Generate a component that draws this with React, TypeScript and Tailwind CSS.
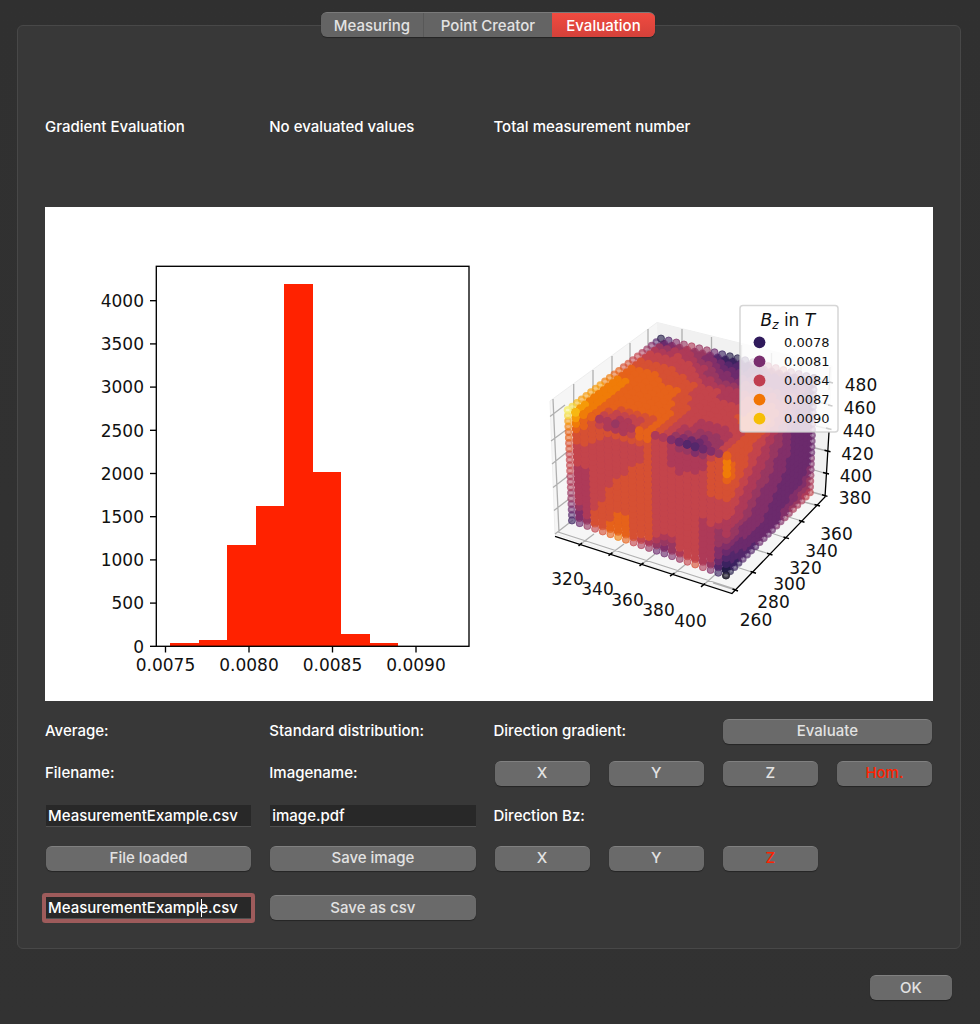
import React from "react";

type Point = [number, number];

const PALETTE = [
  "#17161c", "#241c48", "#3b2260", "#54276b", "#6b2a6c", "#822f69", "#983761", "#ae3a58",
  "#c4444b", "#d65033", "#e6621a", "#f07c08", "#f69a08", "#f7b812", "#f5d93a", "#f6f07c",
];
const N = 20;

const LEFT_FACE = [
  "fecbaa998888777665432",
  "dcba99888877777776554",
  "baa999888877777777766",
  "a99998888888888889998",
  "789988888888888999999",
  "779888888888999999aaa",
  "6798888888999999aaaab",
  "7798888889999999aaaaa",
  "789888899999999999998",
  "aa9888999999999999987",
  "aa9999999999999999976",
  "788888888888888888764",
  "788888888888888887654",
  "577778888888888887665",
  "467777888888888888876",
  "367778888888888888888",
  "357778888888888888889",
  "467788888888777777777",
  "589999998888877777765",
  "699999998888766655432",
  "abbba9998887776543210",
];

const RIGHT_FACE = [
  [9.5, 9, 9, 7, 5, 3],
  [10, 8.6, 7.3, 6, 4, 3],
  [8.5, 7.3, 6.3, 5.2, 4, 4],
  [7.2, 6.3, 5.2, 4.6, 4, 4],
  [4, 4.5, 4.6, 4, 4.2, 5],
  [0.5, 2.5, 3.5, 4.5, 6.5, 8.3],
];

const TOP_STOPS = [0, 0.1, 0.2, 0.4, 0.6, 0.8, 0.9, 1];
const TOP_FACE = [
  [15, 11, 7.5, 6.5, 7.5, 9.5, 7, 3.8, 3, 5, 10],
  [12.5, 10.5, 9, 7.5, 8, 9.5, 8, 6.2, 4.8, 6.2, 9],
  [12, 10.5, 10, 9.6, 10, 9.8, 8, 7, 7, 7.3, 9],
  [11.4, 10.8, 10, 10, 10, 8.8, 8, 8, 8, 9, 9],
  [9.4, 9.6, 9.6, 9.3, 9, 8, 7.6, 7, 7.5, 8, 7],
  [7, 8, 8, 7.5, 6.5, 5, 4, 5, 5, 5, 4],
  [5, 6, 7, 6, 4.5, 2.5, 3, 4, 5, 4, 3],
  [1, 4.5, 7, 5.5, 2, 0.5, 4, 7, 7.5, 4.5, 0.5],
];

const mix = (a: number, b: number, t: number) => a + (b - a) * t;

function along(row: number[], u: number) {
  const x = u * (row.length - 1);
  const i = Math.min(Math.floor(x), row.length - 2);
  return mix(row[i], row[i + 1], x - i);
}

function sample(grid: number[][], stops: number[], u: number, v: number) {
  let j = 0;
  while (j < stops.length - 2 && v > stops[j + 1]) j += 1;
  const t = (v - stops[j]) / (stops[j + 1] - stops[j]);
  return mix(along(grid[j], u), along(grid[j + 1], u), t);
}

function place(a: Point, b: Point, c: Point, d: Point, u: number, v: number): Point {
  return [
    mix(mix(a[0], b[0], u), mix(c[0], d[0], u), v),
    mix(mix(a[1], b[1], u), mix(c[1], d[1], u), v),
  ];
}

const CORNER = {
  left: [567.6, 410] as Point,
  front: [727, 456] as Point,
  back: [661, 338.5] as Point,
  right: [814, 378] as Point,
  leftLow: [572, 520.5] as Point,
  frontLow: [726, 575.5] as Point,
  rightLow: [810, 492.5] as Point,
};

type Edge = "none" | "side" | "ring";

interface Dot {
  x: number;
  y: number;
  color: string;
  edge: Edge;
}

function buildDots(): Dot[] {
  const dots: Dot[] = [];
  const add = (p: Point, value: number, edge: Edge) =>
    dots.push({ x: p[0], y: p[1], color: PALETTE[Math.max(0, Math.min(15, Math.round(value)))], edge });
  const { left, front, back, right, leftLow, frontLow, rightLow } = CORNER;

  for (let j = N; j >= 0; j -= 1) {
    for (let i = 0; i <= N; i += 1) {
      const edge = j === N ? "ring" : i === 0 ? "side" : "none";
      add(place(left, front, back, right, i / N, j / N), sample(TOP_FACE, TOP_STOPS, i / N, j / N), edge);
    }
  }
  const even = [0, 0.2, 0.4, 0.6, 0.8, 1];
  for (let i = N; i >= 0; i -= 1) {
    for (let j = N; j >= 0; j -= 1) {
      add(place(front, right, frontLow, rightLow, i / N, j / N), sample(RIGHT_FACE, even, i / N, j / N), i === N || j === N ? "side" : "none");
    }
  }
  for (let j = N; j >= 0; j -= 1) {
    for (let i = 0; i <= N; i += 1) {
      const edge = j === N ? "ring" : i === 0 ? "side" : "none";
      add(place(left, front, leftLow, frontLow, i / N, j / N), parseInt(LEFT_FACE[i][j], 16), edge);
    }
  }
  return dots;
}

const DOTS = buildDots();

const BARS = [
  [170, 199, 643], [199, 227, 640], [227, 256, 545], [256, 284, 506],
  [284, 313, 284], [313, 341, 472], [341, 370, 634], [370, 398, 643],
];
const COUNT_TICKS = [0, 500, 1000, 1500, 2000, 2500, 3000, 3500, 4000];
const FIELD_TICKS: [number, string][] = [
  [165.5, "0.0075"], [249, "0.0080"], [332.5, "0.0085"], [416, "0.0090"],
];

function Histogram() {
  return (
    <g>
      {BARS.map(([x0, x1, y]) => (
        <rect key={x0} x={x0} y={y} width={x1 - x0} height={646 - y} fill="#ff2200" shapeRendering="crispEdges" />
      ))}
      <rect x="156.3" y="266.3" width="312.7" height="380" fill="none" stroke="#000" strokeWidth="1.35" />
      {COUNT_TICKS.map((n) => {
        const y = 646.3 - (n / 500) * 43.2;
        return (
          <g key={n}>
            <line x1="150" x2="156" y1={y} y2={y} stroke="#000" strokeWidth="1.35" />
            <text x="144" y={y + 6.3} textAnchor="end">{n}</text>
          </g>
        );
      })}
      {FIELD_TICKS.map(([x, label]) => (
        <g key={label}>
          <line x1={x} x2={x} y1="646" y2="652.5" stroke="#000" strokeWidth="1.35" />
          <text x={x} y="671" textAnchor="middle">{label}</text>
        </g>
      ))}
    </g>
  );
}

const GRID_LINES =
  "M553 399L559 532.5M573.7 384V408M593 370V396M612 356V380M630 343V366M648 329V352" +
  "M682 329V345M711.5 337V355M741.5 345V362M771.5 353V370M801 361V378M830 367L829 390" +
  "M550 416.5L565 405M551 441L566 430M552 464L567 452M553 487.5L568 476M554 510.5L569 499M555 534L573 520" +
  "M558 532L735 589M580 544.5L594 534M610.5 554L624 544M641.5 564.5L655 554M672.5 575L686 564M703.5 585L717 573" +
  "M735 590L713 583M753.5 572.5L733 566M770 554L750 548M786 538L768 532M802 521L785 516M817.5 505.5L804 502" +
  "M824.5 495.5L812 492M826 473.5L814 470M827.5 451L815 448M829 429L816 426M830 405L818 402M831 382L818 379";
const AXES = "M555 536.3L732 593.5L825 497L829 432";
const AXIS_TICKS =
  "M582 543L578.5 545.8M612.5 552.6L608.5 555.6M643.5 562.8L639.5 565.8M674.5 573L670 576.2M705 583.5L701 586.8" +
  "M732.5 589L738 591M750.5 571.5L756 573.2M767 553.3L772.5 555M783.5 537L789 538.6M799 520.5L804.5 522.2M814.5 504.5L820 506" +
  "M822 494.8L827.5 496.4M823 472.5L829 474M824.5 450.3L830.5 451.8M826 428L831.5 429.5M828 405L832.5 406M829 382L833 383";
const SCATTER_LABELS: [number, number, number][] = [
  [320, 567.5, 585], [340, 597.5, 595], [360, 627.5, 605.5], [380, 658.5, 616], [400, 690.5, 626.5],
  [260, 756, 626], [280, 773.5, 608], [300, 789.5, 590], [320, 805.5, 573.5], [340, 821.5, 556.5], [360, 836.5, 540],
  [380, 855, 503.5], [400, 856, 481.5], [420, 857.5, 459.5], [440, 859, 436.5], [460, 860, 414], [480, 861, 391],
];
const LEGEND = [
  ["0.0078", "#2f1a5b"], ["0.0081", "#792d6e"], ["0.0084", "#c03e50"], ["0.0087", "#f17504"], ["0.0090", "#f6be07"],
];

function Scatter() {
  return (
    <g>
      <path d="M657 322.5L832 366L825 497L732 593L555 534L550 401Z" fill="#f6f6f6" stroke="#eeeeee" />
      <path d="M657 322.5L832 366L825 497L660 450Z" fill="#f1f1f1" />
      <path d={GRID_LINES} fill="none" stroke="#b0b0b0" strokeWidth="1.3" />
      <path d={AXES} fill="none" stroke="#000" strokeWidth="1.3" />
      <path d={AXIS_TICKS} fill="none" stroke="#000" strokeWidth="1.5" />
      <polygon points="576,412 661,348 804,386 801,487 724,564 578,512" fill="#a83c58" />
      {DOTS.map((d, i) => (
        <circle key={i} cx={d.x} cy={d.y} r={d.edge === "none" ? 4.4 : 3.8} fill={d.color} fillOpacity={d.edge === "none" ? 1 : 0.7} />
      ))}
      {DOTS.filter((d) => d.edge === "ring").map((d, i) => (
        <circle key={i} cx={d.x} cy={d.y} r="3.4" fill="#fff" fillOpacity="0.1" stroke={d.color} strokeOpacity="0.45" />
      ))}
      {DOTS.filter((d) => d.edge === "side").map((d, i) => (
        <ellipse key={i} cx={d.x} cy={d.y} rx="2" ry="1.3" fill="#fff" fillOpacity="0.25" />
      ))}
      <rect x="740" y="305.5" width="98" height="126.5" rx="3" fill="#fff" fillOpacity="0.8" stroke="#ccc" strokeOpacity="0.8" strokeWidth="1.5" />
      <text x="760.5" y="325.5">
        <tspan fontStyle="italic">B</tspan>
        <tspan fontStyle="italic" fontSize="12" dy="3">z</tspan>
        <tspan dy="-3"> in </tspan>
        <tspan fontStyle="italic">T</tspan>
      </text>
      {LEGEND.map(([label, color], i) => (
        <g key={label}>
          <circle cx="759.5" cy={342.3 + i * 19.1} r="5.9" fill={color} />
          <text x="784" y={347 + i * 19.1} fontSize="13">{label}</text>
        </g>
      ))}
      {SCATTER_LABELS.map(([n, x, y]) => (
        <text key={`${n}-${x}`} x={x} y={y} textAnchor="middle">{n}</text>
      ))}
    </g>
  );
}

const PUSH =
  "mx-px flex h-[25px] items-center justify-center rounded-md border-t border-[#808080] bg-[#6a6a6a] pb-0.5 leading-none shadow-[0_1px_1px_rgba(0,0,0,0.35)]";

function PushButton({ children, active = false, wide = false }: { children: React.ReactNode; active?: boolean; wide?: boolean }) {
  return (
    <button type="button" className={`${PUSH} ${active ? "text-[#ff2200]" : "text-[#e2e2e2]"} ${wide ? "col-span-2" : ""}`}>
      {children}
    </button>
  );
}

const FIELD = "block h-[22px] w-full border-b border-[#505050] bg-[#282828] px-0.5 leading-none text-white outline-none";

export default function App() {
  return (
    <main className="flex min-h-screen flex-col bg-linear-to-b from-[#303030] to-[#323232] font-['Inter','Liberation_Sans',sans-serif] text-[15px] leading-6 font-medium text-white">
      <div role="tablist" className="z-10 mt-3 mr-1 flex h-[25px] self-center overflow-hidden rounded-md border-t border-[#7a7a7a] bg-[#646464] text-[#e2e2e2] shadow-[0_1px_1px_rgba(0,0,0,0.35)]">
        <button type="button" role="tab" aria-selected="false" className="w-[103px] border-r border-[#585858] leading-none">Measuring</button>
        <button type="button" role="tab" aria-selected="false" className="w-32 leading-none">Point Creator</button>
        <button type="button" role="tab" aria-selected="true" className="w-[103px] bg-linear-to-b from-[#f04b40] to-[#d4413a] leading-none text-white">Evaluation</button>
      </div>

      <section className="mr-[19px] -mt-3 ml-[17px] rounded-md border border-[#484848] bg-[#383838] px-[27px] pb-5">
        <div className="grid grid-cols-[207fr_207fr_439fr] gap-x-[17px] pt-[89px] pb-[68px]">
          <p>Gradient Evaluation</p>
          <p>No evaluated values</p>
          <p>Total measurement number</p>
        </div>

        <svg viewBox="45 207 888 494" className="block w-full bg-white font-['DejaVu_Sans',sans-serif] font-normal" fontSize="17" fill="#111" role="img" aria-label="Histogram and 3D scatter of the measured field">
          <Histogram />
          <Scatter />
        </svg>

        <div className="mt-[17px] grid grid-cols-[207fr_207fr_97fr_97fr_97fr_97fr] grid-rows-[26px_26px_27px_26px_41px] items-center gap-x-[17px] gap-y-4">
          <p>Average:</p>
          <p>Standard distribution:</p>
          <p className="col-span-2">Direction gradient:</p>
          <PushButton wide>Evaluate</PushButton>

          <label htmlFor="filename">Filename:</label>
          <label htmlFor="imagename">Imagename:</label>
          <PushButton>X</PushButton>
          <PushButton>Y</PushButton>
          <PushButton>Z</PushButton>
          <PushButton active>Hom.</PushButton>

          <div className="px-px">
            <input id="filename" defaultValue="MeasurementExample.csv" className={FIELD} />
          </div>
          <div className="px-px">
            <input id="imagename" defaultValue="image.pdf" className={FIELD} />
          </div>
          <p className="col-span-4">Direction Bz:</p>

          <PushButton>File loaded</PushButton>
          <PushButton>Save image</PushButton>
          <PushButton>X</PushButton>
          <PushButton>Y</PushButton>
          <PushButton active>Z</PushButton>
          <span />

          <div className="relative px-px">
            <div className="rounded-[1px] ring-4 ring-[#9e5b5b]">
              <input aria-label="CSV file name" defaultValue="MeasurementExample.csv" className={FIELD} />
            </div>
            <span className="absolute top-0.5 left-[156px] h-[18px] w-px bg-white" />
          </div>
          <PushButton>Save as csv</PushButton>
        </div>
      </section>

      <div className="mt-[26px] mr-[27px] flex justify-end">
        <button type="button" className={`${PUSH} w-[82px] text-[#e2e2e2]`}>OK</button>
      </div>
    </main>
  );
}
